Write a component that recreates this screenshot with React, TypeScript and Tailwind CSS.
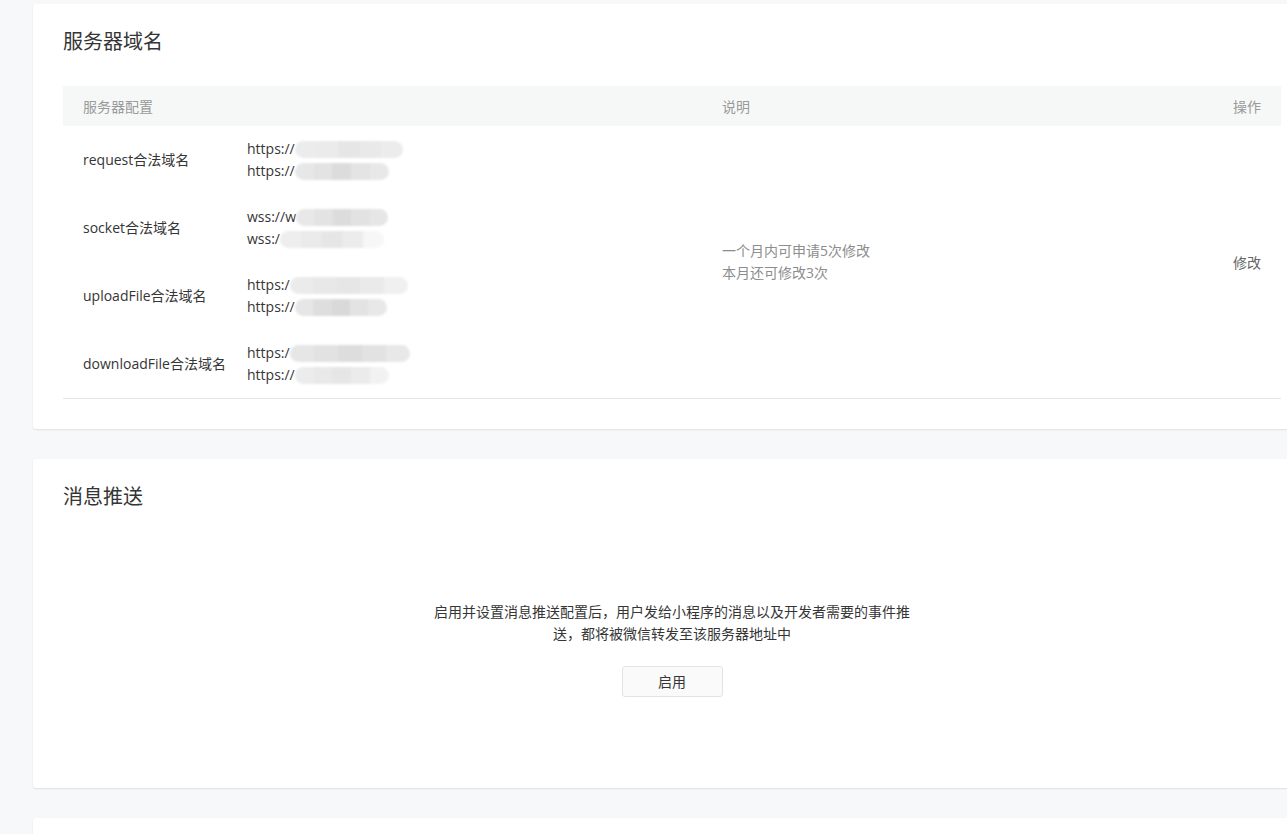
import React from "react";

type Row = {
   label: string;
   urls: { prefix: string; width: number; cells: string[] }[];
};

const rows: Row[] = [
   {
      label: "request合法域名",
      urls: [
         { prefix: "https://", width: 108, cells: ["#ececec", "#ebebeb", "#e6e6e6", "#e9e9e9", "#ececec"] },
         { prefix: "https://", width: 94, cells: ["#e7e7e7", "#e3e3e3", "#dcdcdc", "#e4e4e4", "#e8e8e8"] },
      ],
   },
   {
      label: "socket合法域名",
      urls: [
         { prefix: "wss://w", width: 92, cells: ["#e8e8e8", "#e3e3e3", "#dcdcdc", "#e2e2e2", "#e6e6e6"] },
         { prefix: "wss:/", width: 104, cells: ["#eeeeee", "#eaeaea", "#e6e6e6", "#ececec", "#f7f7f7"] },
      ],
   },
   {
      label: "uploadFile合法域名",
      urls: [
         { prefix: "https:/", width: 118, cells: ["#ebebeb", "#e8e8e8", "#e6e6e6", "#eaeaea", "#f0f0f0"] },
         { prefix: "https://", width: 92, cells: ["#e6e6e6", "#dedede", "#d9d9d9", "#e3e3e3", "#e8e8e8"] },
      ],
   },
   {
      label: "downloadFile合法域名",
      urls: [
         { prefix: "https:/", width: 120, cells: ["#e6e6e6", "#e2e2e2", "#dddddd", "#e2e2e2", "#e8e8e8"] },
         { prefix: "https://", width: 94, cells: ["#ececec", "#e9e9e9", "#e6e6e6", "#ebebeb", "#f2f2f2"] },
      ],
   },
];

const Blob = ({ width, cells }: { width: number; cells: string[] }) => (
   <span
      className="inline-flex h-[17px] align-middle overflow-hidden rounded-full blur-[1px]"
      style={{ width }}
   >
      {cells.map((c, i) => (
         <span key={i} className="flex-1 h-full" style={{ background: c }} />
      ))}
   </span>
);

const Card = ({ title, children }: { title: string; children: React.ReactNode }) => (
   <div className="w-[1278px] bg-white rounded-[3px] shadow-[0_1px_2px_rgba(0,0,0,0.1)] px-[30px] pt-[24px]">
      <h2 className="text-[20px] leading-[28px] text-[#353535] font-normal">{title}</h2>
      {children}
   </div>
);

export default function App() {
   return (
      <div
         className="w-[1287px] h-[834px] overflow-hidden bg-[#f6f8f9] pl-[33px] pt-[4px] flex flex-col gap-[30px] text-[14px] text-[#353535]"
         style={{ fontFamily: '"Open Sans", "Noto Sans CJK SC", sans-serif' }}
      >
         <Card title="服务器域名">
            <div className="mt-[30px] pb-[30px]">
               <div className="flex h-[40px] items-center bg-[#f6f8f8] text-[#9a9a9a]">
                  <div className="w-[639px] pl-[20px]">服务器配置</div>
                  <div className="flex-1 pl-[20px]">说明</div>
                  <div className="pr-[20px]">操作</div>
               </div>
               <div className="flex border-b border-[#e7e7e7]">
                  <div className="w-[639px]">
                     {rows.map((row) => (
                        <div key={row.label} className="flex items-center h-[68px]">
                           <div className="w-[184px] pl-[20px] leading-[22px]">{row.label}</div>
                           <div className="flex flex-col leading-[22px]">
                              {row.urls.map((u, i) => (
                                 <div key={i} className="flex items-center h-[22px]">
                                    <span>{u.prefix}</span>
                                    <Blob width={u.width} cells={u.cells} />
                                 </div>
                              ))}
                           </div>
                        </div>
                     ))}
                  </div>
                  <div className="flex-1 pl-[20px] flex flex-col justify-center leading-[22px] text-[#8d8d8d]">
                     <div>一个月内可申请5次修改</div>
                     <div>本月还可修改3次</div>
                  </div>
                  <div className="pr-[20px] flex items-center text-[#666666]">修改</div>
               </div>
            </div>
         </Card>
         <Card title="消息推送">
            <div className="pt-[90px] pb-[91px] flex flex-col items-center">
               <p className="w-[480px] text-center leading-[22px]">
                  启用并设置消息推送配置后，用户发给小程序的消息以及开发者需要的事件推送，都将被微信转发至该服务器地址中
               </p>
               <button className="mt-[21px] w-[101px] h-[31px] border border-[#e3e3e3] bg-[#fafafa] rounded-[3px] text-[#353535]">
                  启用
               </button>
            </div>
         </Card>
         <Card title="">
            <div className="h-[40px]" />
         </Card>
      </div>
   );
}
